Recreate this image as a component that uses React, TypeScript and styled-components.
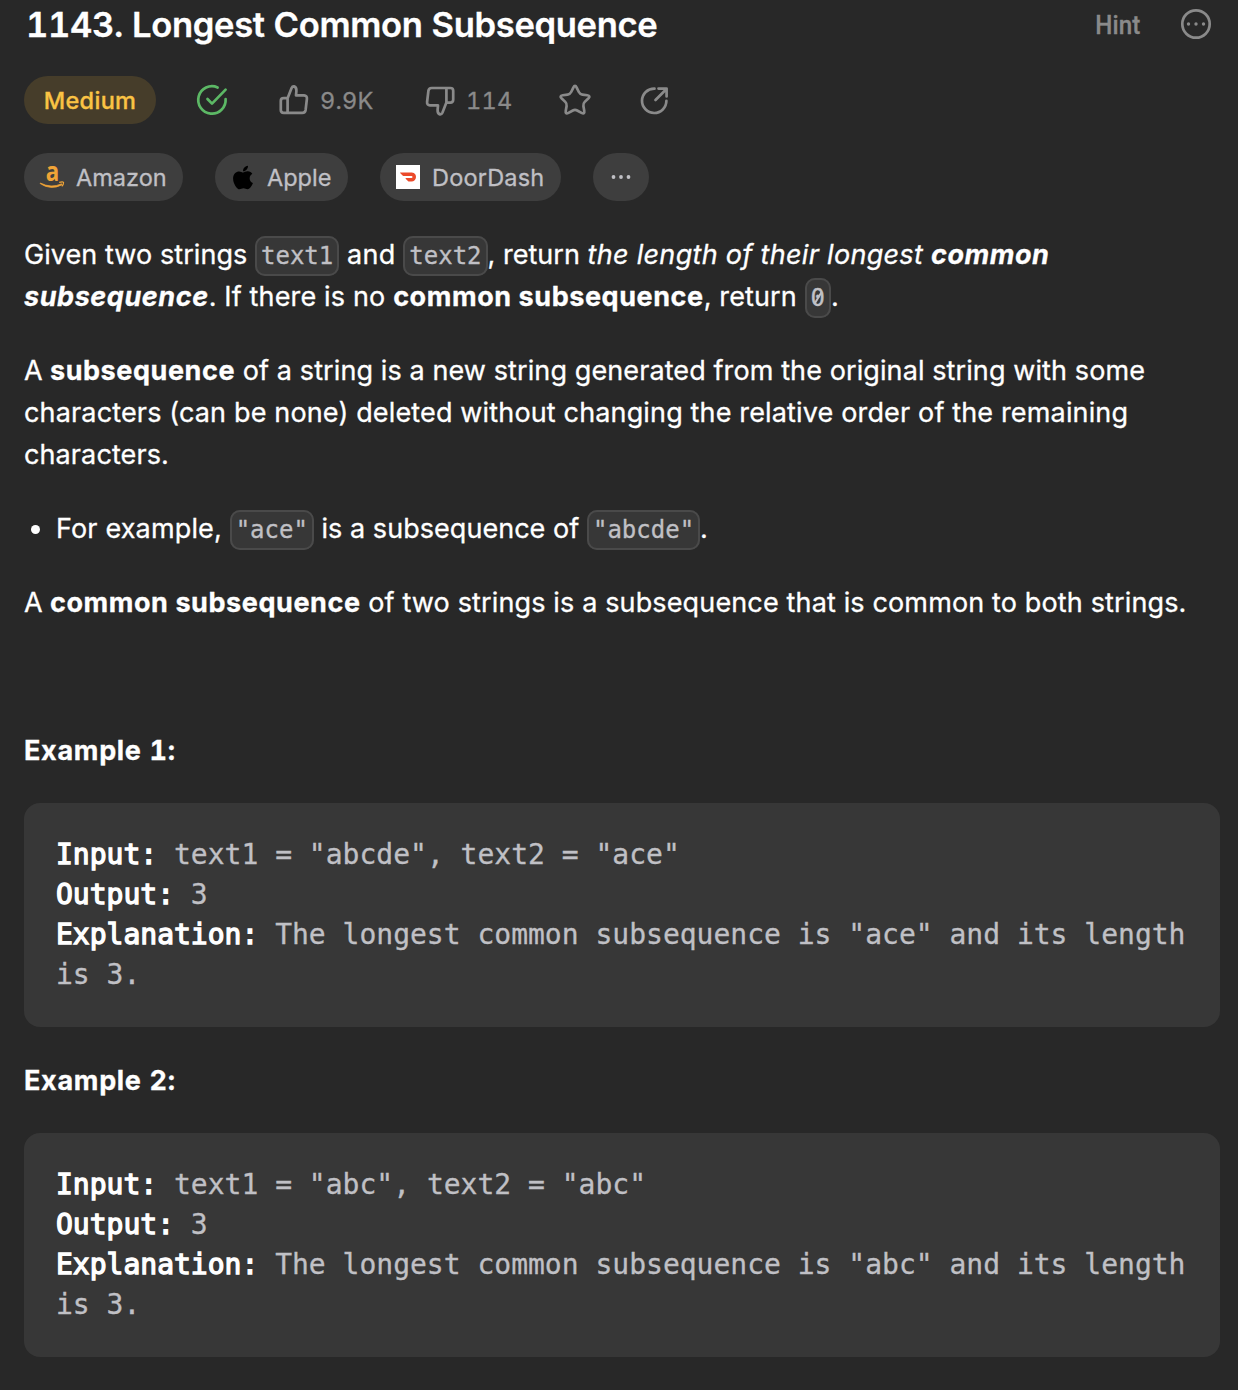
import React from "react";
import styled, { createGlobalStyle } from "styled-components";
import { FaApple } from "react-icons/fa";
import { SiDoordash } from "react-icons/si";

const sans = `Inter, "Noto Sans", sans-serif`;
const mono = `"DejaVu Sans Mono", "Liberation Mono", monospace`;

const GlobalStyle = createGlobalStyle`
  * { box-sizing: border-box; }
  body { margin: 0; background: #282828; color: #fff; font-family: ${sans}; }
`;

const Page = styled.main`
  width: 1238px;
  height: 1390px;
  padding: 0 18px 0 24px;
  overflow: hidden;
  background: #282828;
  -webkit-text-stroke: 0.3px currentColor;
`;

const Header = styled.header`
  display: flex;
  align-items: center;
  justify-content: space-between;
  height: 48px;
`;

const Title = styled.h1`
  margin: 0;
  padding-left: 2px;
  font-size: 34.6px;
  font-weight: 600;
  line-height: 48px;
  letter-spacing: -0.34px;
  white-space: nowrap;
  font-feature-settings: "tnum";
`;

const HeaderActions = styled.div`
  display: flex;
  align-items: center;
  gap: 38px;
  padding-right: 6px;
  color: #8a8a8a;
`;

const HintLabel = styled.span`
  width: 48px;
  padding-top: 1px;
  font: 500 26px/48px Roboto, sans-serif;
  transform: scaleX(0.93);
  transform-origin: right;
`;

const StatRow = styled.div`
  display: flex;
  align-items: center;
  height: 48px;
  margin-top: 28px;
  color: #8a8a8a;
`;

const Difficulty = styled.span`
  width: 132px;
  height: 48px;
  border-radius: 24px;
  background: #463d2a;
  color: #fac344;
  font-size: 23.5px;
  font-weight: 550;
  line-height: 50px;
  letter-spacing: 0.3px;
  text-align: center;
`;

const Stat = styled.span<{ $before: number }>`
  display: flex;
  align-items: center;
  gap: 8px;
  margin-left: ${(p) => p.$before}px;
`;

const Count = styled.span<{ $width: number }>`
  width: ${(p) => p.$width}px;
  height: 48px;
  font-size: 23.5px;
  line-height: 50px;
  letter-spacing: 0.2px;
  font-feature-settings: "tnum";
`;

const Svg = styled.svg`
  display: block;
  flex: none;
  fill: none;
  stroke: currentColor;
  stroke-width: 2.7;
  stroke-linecap: round;
  stroke-linejoin: round;
`;

const CompanyRow = styled.div`
  display: flex;
  gap: 32px;
  margin-top: 29px;
`;

const Company = styled.span<{ $width: number; $ls?: number }>`
  display: flex;
  align-items: center;
  gap: 12px;
  width: ${(p) => p.$width}px;
  height: 48px;
  padding-left: 16px;
  border-radius: 24px;
  background: #3e3e3e;
  color: #c0c0c5;
  font-size: 23.5px;
  letter-spacing: ${(p) => p.$ls ?? 0}px;
  white-space: nowrap;
`;

const More = styled(Company)`
  justify-content: center;
  padding: 0;
`;

const Logo = styled.span<{ $bg?: string; $color: string }>`
  display: flex;
  flex: none;
  align-items: center;
  justify-content: center;
  width: 24px;
  height: 24px;
  background: ${(p) => p.$bg ?? "transparent"};
  color: ${(p) => p.$color};
`;

const LogoSvg = styled.svg`
  overflow: visible;
`;

const AmazonLetter = styled.text`
  fill: #f0a437;
  font: 700 26px "Open Sans", sans-serif;
`;

const Body = styled.article`
  margin-top: 33px;
  font-size: 27px;
  line-height: 42px;
  white-space: nowrap;
`;

const Paragraph = styled.p`
  margin: 0 0 32px;
`;

const Bullets = styled.ul`
  margin: 0 0 32px;
  padding: 0;
  list-style: none;
`;

const Bullet = styled.li`
  display: flex;
  align-items: center;
  height: 42px;

  &::before {
    content: "";
    width: 9px;
    height: 9px;
    margin: 0 16px 0 7px;
    border-radius: 50%;
    background: #fff;
  }
`;

const Run = styled.span<{ $ls: number }>`
  letter-spacing: ${(p) => p.$ls}px;
  white-space: pre;
`;

const Strong = styled.strong`
  font-weight: 700;
  letter-spacing: 0.57px;
`;

const Code = styled.code`
  padding: 4px;
  border: 2px solid #4a4a4a;
  border-radius: 10px;
  background: #373737;
  color: #c0c0c5;
  font: 24px/1 ${mono};
`;

/* A zero with a diagonal stroke through its counter. */
const SlashedZero = styled(Code)`
  position: relative;

  &::after {
    content: "";
    position: absolute;
    left: 10px;
    top: 11px;
    width: 2.2px;
    height: 14px;
    background: currentColor;
    transform: rotate(31deg);
  }
`;

const ExampleTitle = styled.h2`
  margin: 0 0 31px;
  font-size: 27px;
  font-weight: 700;
  line-height: 42px;
  letter-spacing: 0.7px;
  font-feature-settings: "tnum";
`;

const Sample = styled.pre`
  width: 1196px;
  margin: 0 0 33px;
  padding: 32px;
  border-radius: 16px;
  background: #373737;
  color: #c0c0c5;
  font: 28px/40px ${mono};
  white-space: pre-wrap;
`;

const Label = styled.b`
  color: #fff;
  font-weight: 400;
  -webkit-text-stroke: 1.3px currentColor;
`;

const thumb =
  "M11.6 15.2 L15.6 5 Q16.4 3.2 18 3.4 Q20.6 4.2 20.4 8 L20 12.4 H28 Q31.2 12.6 30.9 15.8 L29.6 27 Q29.2 29.8 26.4 29.8 H7.6 Q4.8 29.8 4.8 27 V18 Q4.8 15.2 7.6 15.2 Z M11.6 15.2 V29.8";

const ThumbUp = () => <Svg width="36" height="34" viewBox="0 0 36 34"><path d={thumb} /></Svg>;
const ThumbDown = () => (
  <Svg width="36" height="34" viewBox="0 0 36 34"><path d={thumb} transform="rotate(180 18 17.4)" /></Svg>
);

// Five-pointed star whose corners are softened with quadratic curves.
function starPath(cx: number, cy: number, outer: number, inner: number) {
  const pts = Array.from({ length: 10 }, (_, i) => {
    const a = ((-90 + i * 36) * Math.PI) / 180;
    const r = i % 2 ? inner : outer;
    return [cx + r * Math.cos(a), cy + r * Math.sin(a)];
  });
  const mix = (a: number[], b: number[], t: number) =>
    `${(a[0] + (b[0] - a[0]) * t).toFixed(2)} ${(a[1] + (b[1] - a[1]) * t).toFixed(2)}`;
  return (
    pts
      .map((p, i) => {
        const t = i % 2 ? 0.22 : 0.34;
        return `${i ? "L" : "M"}${mix(p, pts[(i + 9) % 10], t)} Q${p[0].toFixed(2)} ${p[1].toFixed(2)} ${mix(p, pts[(i + 1) % 10], t)}`;
      })
      .join(" ") + " Z"
  );
}

const explanation = (word: string) => ` The longest common subsequence is "${word}" and its length is 3.`;

const Example = ({ n, a, b }: { n: number; a: string; b: string }) => (
  <>
    <ExampleTitle>Example {n}:</ExampleTitle>
    <Sample>
      <Label>Input:</Label>{` text1 = "${a}", text2 = "${b}"\n`}
      <Label>Output:</Label>{" 3\n"}
      <Label>Explanation:</Label>{explanation(b)}
    </Sample>
  </>
);

export default function App() {
  return (
    <Page>
      <GlobalStyle />
      <Header>
        <Title>1143. Longest Common Subsequence</Title>
        <HeaderActions>
          <HintLabel>Hint</HintLabel>
          <Svg width="36" height="36" viewBox="0 0 36 36">
            <circle cx="18" cy="18" r="13.7" />
            <g fill="currentColor" stroke="none">
              <circle cx="10.5" cy="18" r="1.7" />
              <circle cx="18" cy="18" r="1.7" />
              <circle cx="25.5" cy="18" r="1.7" />
            </g>
          </Svg>
        </HeaderActions>
      </Header>

      <StatRow>
        <Difficulty>Medium</Difficulty>
        <Stat $before={38}>
          <Svg width="36" height="36" viewBox="0 0 36 36" color="#5cb865">
            <path d="M23.6 5.5 A13.7 13.7 0 1 0 31.6 17" />
            <path d="M13.5 17 L18 21.6 L31.6 7.6" />
          </Svg>
        </Stat>
        <Stat $before={46}>
          <ThumbUp />
          <Count $width={60}>9.9K</Count>
        </Stat>
        <Stat $before={42}>
          <ThumbDown />
          <Count $width={50}>114</Count>
        </Stat>
        <Stat $before={41}>
          <Svg width="36" height="36" viewBox="0 0 36 36"><path d={starPath(18, 19, 16.8, 8.4)} /></Svg>
        </Stat>
        <Stat $before={43}>
          <Svg width="36" height="36" viewBox="0 0 36 36">
            <path d="M18.5 6.6 A12.2 12.2 0 1 0 30.4 18.8" />
            <path d="M19.5 18 L30.5 7 M22.5 6.6 H30.6 V14.4" />
          </Svg>
        </Stat>
      </StatRow>

      <CompanyRow>
        <Company $width={159}>
          <Logo $color="#f0a437">
            <LogoSvg width="24" height="24" viewBox="0 0 24 24">
              <AmazonLetter transform="translate(5.8 15.8) scale(.86 1)">a</AmazonLetter>
              <path d="M0.3 18 Q11 23.6 21.6 18.8 L21.9 19.9 Q10.5 25.6 0.2 18.6 Z" fill="currentColor" stroke="currentColor" strokeWidth=".7" />
              <path d="M19.2 17.4 Q22.6 16.4 23.6 17.3 Q23.8 19.4 21.8 21.4" fill="none" stroke="currentColor" strokeWidth="1.1" />
            </LogoSvg>
          </Logo>
          Amazon
        </Company>
        <Company $width={133}>
          <Logo $color="#000"><FaApple size={27} /></Logo>
          Apple
        </Company>
        <Company $width={181} $ls={0.2}>
          <Logo $bg="#fff" $color="#eb4a2a"><SiDoordash size={16} /></Logo>
          DoorDash
        </Company>
        <More $width={56}>
          <svg width="24" height="6" viewBox="0 0 24 6" fill="currentColor">
            <circle cx="4.5" cy="3" r="1.9" />
            <circle cx="12" cy="3" r="1.9" />
            <circle cx="19.5" cy="3" r="1.9" />
          </svg>
        </More>
      </CompanyRow>

      <Body>
        <Paragraph>
          <Run $ls={0.067}>{"Given two strings "}</Run><Code>text1</Code><Run $ls={0.24}>{" and "}</Run><Code>text2</Code>
          <Run $ls={0.02}>{", return "}</Run>
          <em><Run $ls={0.3}>{"the length of their longest "}</Run><Strong>common</Strong></em>
          <br />
          <em><Strong>subsequence</Strong></em><Run $ls={0.15}>{". If there is no "}</Run>
          <Strong>common subsequence</Strong><Run $ls={0.12}>{", return "}</Run><SlashedZero>0</SlashedZero>.
        </Paragraph>
        <Paragraph>
          <Run $ls={-0.15}>{"A "}</Run><Strong>subsequence</Strong>
          <Run $ls={0.1}>{" of a string is a new string generated from the original string with some"}</Run>
          <br />
          <Run $ls={0.15}>characters (can be none) deleted without changing the relative order of the remaining</Run>
          <br />
          <Run $ls={0.1}>characters.</Run>
        </Paragraph>
        <Bullets>
          <Bullet>
            <span>
              <Run $ls={0.15}>{"For example, "}</Run><Code>"ace"</Code>
              <Run $ls={0.04}>{" is a subsequence of "}</Run><Code>"abcde"</Code>.
            </span>
          </Bullet>
        </Bullets>
        <Paragraph>
          <Run $ls={-0.15}>{"A "}</Run><Strong>common subsequence</Strong>
          <Run $ls={0.14}>{" of two strings is a subsequence that is common to both strings."}</Run>
        </Paragraph>
        <Paragraph>&nbsp;</Paragraph>
        <Example n={1} a="abcde" b="ace" />
        <Example n={2} a="abc" b="abc" />
      </Body>
    </Page>
  );
}
